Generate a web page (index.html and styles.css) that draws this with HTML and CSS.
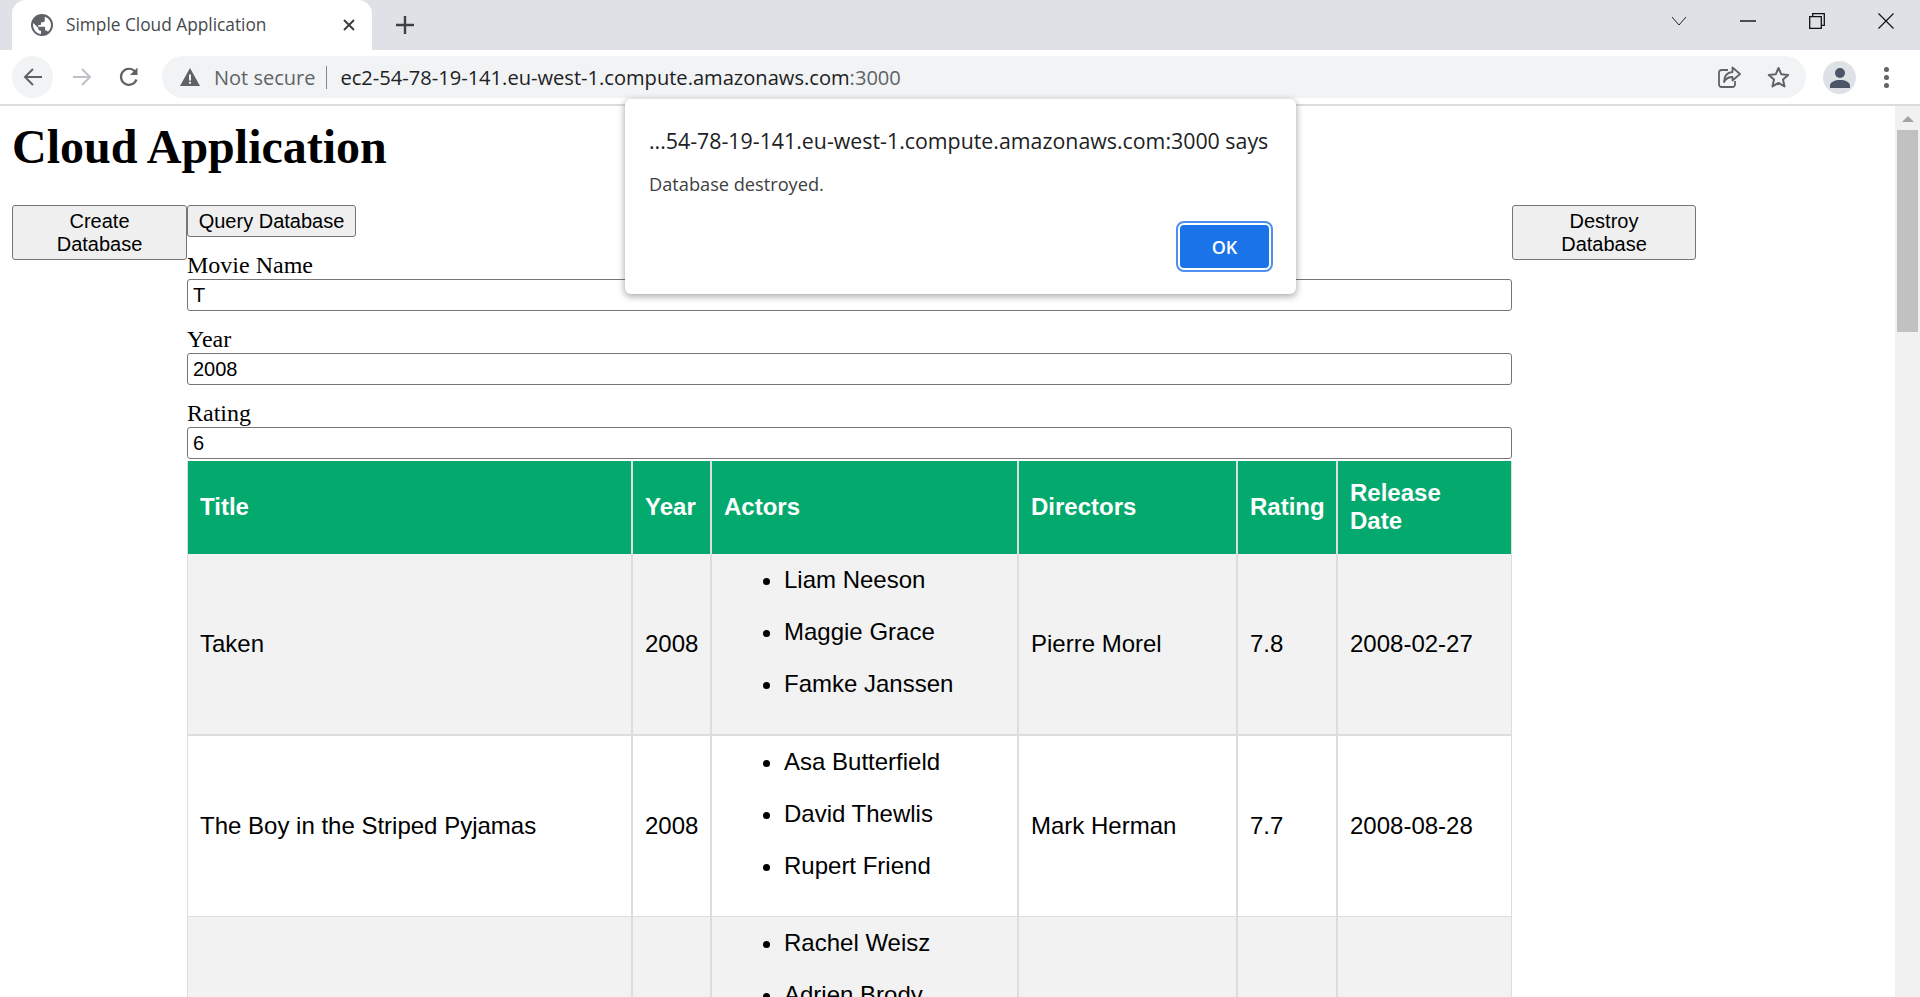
FILE: index.html
```html
<!DOCTYPE html>
<html lang="en">
<head>
    <meta charset="UTF-8">
    <meta name="viewport" content="width=device-width, initial-scale=1.0">
    <title>Simple Cloud Application</title>
    <link rel="stylesheet" href="styles.css">
</head>
<body>

<div class="browser">
    <div class="tabstrip">
        <div class="tab">
            <svg class="favicon" viewBox="0 0 24 24"><circle cx="12" cy="12" r="12" fill="#5f6368"/><path d="M11 21.9C6.1 21.4 2.2 17.2 2.2 12c0-.8.1-1.5.3-2.2L8 15.2v1c0 1.100.9 2 2 2h1zM18.300 19.400c-.3-.8-1-1.400-1.900-1.400h-1v-3c0-.6-.4-1-1-1H8v-2h2c.6 0 1-.4 1-1V9h2c1.100 0 2-.9 2-2V3c3.800 1.200 6.800 4.800 6.800 9 0 2.900-1.400 5.600-3.500 7.400z" fill="#fff"/></svg>
            <span class="tab-title">Simple Cloud Application</span>
            <svg class="tab-close" viewBox="0 0 12 12"><path d="M1 1l10 10M11 1L1 11" stroke="#3c4043" stroke-width="2"/></svg>
        </div>
        <svg class="new-tab" viewBox="0 0 18 18"><path d="M9 0v18M0 9h18" stroke="#3c4043" stroke-width="2.4"/></svg>
        <div class="win-controls">
            <div class="win-btn"><svg width="16" height="10" viewBox="0 0 16 10"><path d="M1 1l7 8 7-8" fill="none" stroke="#222" stroke-width="1"/></svg></div>
            <div class="win-btn"><svg width="16" height="2" viewBox="0 0 16 2"><path d="M0 1h16" stroke="#111" stroke-width="1.400"/></svg></div>
            <div class="win-btn"><svg width="16" height="16" viewBox="0 0 16 16"><path d="M.7 3.700h11.600v11.600H.7zM3.700 3.700V.7h11.600v11.600h-3" fill="none" stroke="#111" stroke-width="1.300"/></svg></div>
            <div class="win-btn"><svg width="16" height="16" viewBox="0 0 16 16"><path d="M.5.5l15 15M15.500.5l-15 15" stroke="#111" stroke-width="1.200"/></svg></div>
        </div>
    </div>

    <div class="toolbar">
        <div class="nav-btn hover"><svg width="20" height="20" viewBox="0 0 20 20"><path d="M19 10H2M10 2l-8 8 8 8" fill="none" stroke="#5f6368" stroke-width="2"/></svg></div>
        <div class="nav-btn"><svg width="20" height="20" viewBox="0 0 20 20"><path d="M1 10h17M10 2l8 8-8 8" fill="none" stroke="#bdc1c6" stroke-width="2"/></svg></div>
        <div class="nav-btn reload"><svg width="22" height="22" viewBox="0 0 22 22"><path d="M18.500 13.500A8 8 0 1 1 17 5.500" fill="none" stroke="#5f6368" stroke-width="2.200"/><path d="M19.500 1.500v7.500H12z" fill="#5f6368"/></svg></div>
        <div class="omnibox">
            <svg class="warn" viewBox="0 0 20 18"><path d="M10 0l10 18H0z" fill="#5f6368"/><path d="M9 6.500h2v6H9zM9 13.800h2v2H9z" fill="#f1f3f4"/></svg>
            <span class="not-secure">Not secure</span>
            <span class="omni-sep"></span>
            <span class="url">ec2-54-78-19-141.eu-west-1.compute.amazonaws.com<span class="url-port">:3000</span></span>
            <div class="omni-icons">
                <svg width="23" height="22" viewBox="0 0 23 22"><path d="M10 4H3.500A2.500 2.500 0 0 0 1 6.500v12A2.500 2.500 0 0 0 3.500 21h11a2.500 2.500 0 0 0 2.500-2.500V15" fill="none" stroke="#5f6368" stroke-width="1.800"/><path d="M14.500 1.500L22 8l-7.500 6.500V11C10 11 7.500 13 6 16c0-5.500 3-9.500 8.500-10z" fill="none" stroke="#5f6368" stroke-width="1.800" stroke-linejoin="round"/></svg>
                <svg width="23" height="22" viewBox="0 0 23 22"><path d="M11.500 2l2.800 6.300 6.900.7-5.200 4.600 1.500 6.800-6-3.500-6 3.500 1.500-6.800L1.800 9l6.900-.7z" fill="none" stroke="#5f6368" stroke-width="2" stroke-linejoin="round"/></svg>
            </div>
        </div>
        <div class="avatar"><svg width="22" height="20" viewBox="0 0 22 20"><circle cx="11" cy="5" r="5" fill="#4a5568"/><path d="M1 20v-2.500C1 14 6 12 11 12s10 2 10 5.500V20z" fill="#4a5568"/></svg></div>
        <div class="menu-dots"><span></span><span></span><span></span></div>
    </div>

    <div class="viewport">
        <main class="page">
            <h1>Cloud Application</h1>
            <div class="layout">
                <button class="btn btn-create">Create Database</button>
                <div class="center">
                    <button class="btn btn-query">Query Database</button>
                    <label class="field-label">Movie Name</label>
                    <input class="field" type="text" value="T">
                    <label class="field-label">Year</label>
                    <input class="field" type="text" value="2008">
                    <label class="field-label">Rating</label>
                    <input class="field" type="text" value="6">
                    <table class="movies">
                        <colgroup>
                            <col class="col-title">
                            <col class="col-year">
                            <col class="col-actors">
                            <col class="col-directors">
                            <col class="col-rating">
                            <col class="col-date">
                        </colgroup>
                        <thead>
                            <tr>
                                <th>Title</th>
                                <th>Year</th>
                                <th>Actors</th>
                                <th>Directors</th>
                                <th>Rating</th>
                                <th>Release Date</th>
                            </tr>
                        </thead>
                        <tbody>
                            <tr>
                                <td>Taken</td>
                                <td>2008</td>
                                <td><ul><li>Liam Neeson</li><li>Maggie Grace</li><li>Famke Janssen</li></ul></td>
                                <td>Pierre Morel</td>
                                <td>7.8</td>
                                <td>2008-02-27</td>
                            </tr>
                            <tr>
                                <td>The Boy in the Striped Pyjamas</td>
                                <td>2008</td>
                                <td><ul><li>Asa Butterfield</li><li>David Thewlis</li><li>Rupert Friend</li></ul></td>
                                <td>Mark Herman</td>
                                <td>7.7</td>
                                <td>2008-08-28</td>
                            </tr>
                            <tr>
                                <td></td>
                                <td></td>
                                <td><ul><li>Rachel Weisz</li><li>Adrien Brody</li></ul></td>
                                <td></td>
                                <td></td>
                                <td></td>
                            </tr>
                        </tbody>
                    </table>
                </div>
                <button class="btn btn-destroy">Destroy Database</button>
            </div>
        </main>
        <div class="scrollbar">
            <div class="scroll-up"></div>
            <div class="scroll-thumb"></div>
        </div>
    </div>

    <div class="dialog">
        <div class="dialog-title">...54-78-19-141.eu-west-1.compute.amazonaws.com:3000 says</div>
        <div class="dialog-msg">Database destroyed.</div>
        <div class="dialog-actions">
            <button class="dialog-ok">OK</button>
        </div>
    </div>
</div>

</body>
</html>
```

FILE: styles.css
```css
* {
    box-sizing: border-box;
}
html, body {
    margin: 0;
    height: 997px;
    overflow: hidden;
    background: white;
}
.browser {
    position: relative;
    display: flex;
    flex-direction: column;
    height: 997px;
    overflow: hidden;
    font-family: "Open Sans", sans-serif;
}

/* tab strip */
.tabstrip {
    display: flex;
    height: 50px;
    flex: none;
    padding-left: 12px;
    background-color: #dee1e6;
}
.tab {
    display: flex;
    align-items: center;
    width: 360px;
    height: 50px;
    padding-left: 19px;
    background-color: white;
    border-radius: 14px 14px 0 0;
}
.favicon {
    width: 22px;
    height: 22px;
    flex: none;
}
.tab-title {
    margin: -2px 0 0 13px;
    width: 277px;
    font-size: 17.300px;
    color: #45494d;
    white-space: nowrap;
}
.tab-close {
    width: 12px;
    height: 12px;
    flex: none;
}
.new-tab {
    width: 18px;
    height: 18px;
    margin: 16px 0 0 24px;
}
.win-controls {
    display: flex;
    margin-left: auto;
}
.win-btn {
    display: flex;
    align-items: center;
    justify-content: center;
    width: 69px;
    height: 41px;
}

/* toolbar */
.toolbar {
    display: flex;
    align-items: center;
    gap: 8px;
    height: 56px;
    flex: none;
    padding: 6px 0 6px 12px;
    border-bottom: 2px solid #dadce0;
    background-color: white;
}
.nav-btn {
    display: flex;
    align-items: center;
    justify-content: center;
    width: 41px;
    height: 42px;
    border-radius: 50%;
}
.nav-btn.hover {
    background-color: #f1f3f4;
}
.nav-btn.reload {
    padding-right: 3px;
}
.omnibox {
    display: flex;
    align-items: center;
    width: 1644px;
    height: 42px;
    margin-left: 3px;
    padding: 0 16px 0 18px;
    border-radius: 21px;
    background-color: #f1f3f4;
}
.warn {
    width: 20px;
    height: 18px;
    flex: none;
}
.not-secure {
    margin-left: 14px;
    font-size: 20px;
    color: #5f6368;
    white-space: nowrap;
}
.omni-sep {
    width: 1px;
    height: 23px;
    margin: 0 13px 0 11px;
    background-color: #80868b;
}
.url {
    font-size: 20.100px;
    color: #202124;
    white-space: nowrap;
}
.url-port {
    color: #5f6368;
}
.omni-icons {
    display: flex;
    gap: 26px;
    margin-left: auto;
}
.avatar {
    display: flex;
    align-items: flex-end;
    justify-content: center;
    width: 33px;
    height: 33px;
    margin-left: 9px;
    padding-bottom: 6px;
    border-radius: 50%;
    background-color: #dee1e6;
}
.menu-dots {
    display: flex;
    flex-direction: column;
    gap: 3px;
    margin-left: 20px;
}
.menu-dots span {
    width: 5px;
    height: 5px;
    border-radius: 50%;
    background-color: #5f6368;
}

/* page */
.viewport {
    display: flex;
    flex: 1;
    min-height: 0;
}
.page {
    flex: 1;
    min-width: 0;
    padding: 12px 0 0 12px;
    overflow: hidden;
    font-family: "Liberation Serif", serif;
    font-size: 24px;
    color: black;
}
h1 {
    margin: 1px 0 31px;
    font-size: 48px;
    line-height: 55px;
}
.layout {
    display: flex;
    align-items: flex-start;
}
.center {
    width: 1325px;
    flex: none;
}
.btn {
    padding: 0 8px;
    border: 1.5px solid #767676;
    border-radius: 3px;
    background-color: #efefef;
    font-family: "Liberation Sans", sans-serif;
    font-size: 20px;
    line-height: 23px;
    color: black;
}
.btn-create {
    width: 175px;
    height: 55px;
    flex: none;
    padding: 0 20px;
}
.btn-destroy {
    width: 184px;
    height: 55px;
    flex: none;
    padding: 0 20px;
}
.btn-query {
    display: block;
    width: 169px;
    height: 32px;
    white-space: nowrap;
}
.field-label {
    display: block;
    margin-top: 15px;
    line-height: 27px;
}
.field {
    display: block;
    width: 100%;
    height: 32px;
    padding: 0 5px;
    border: 1.5px solid #767676;
    border-radius: 3px;
    font-family: "Liberation Sans", sans-serif;
    font-size: 20px;
    color: black;
}

/* table */
.movies {
    width: 1325px;
    margin-top: 2px;
    table-layout: fixed;
    border-collapse: separate;
    border-spacing: 0;
    border-left: 1px solid #ddd;
    font-family: "Liberation Sans", sans-serif;
    font-size: 24px;
    line-height: 28px;
}
.col-title { width: 445px; }
.col-year { width: 79px; }
.col-actors { width: 307px; }
.col-directors { width: 219px; }
.col-rating { width: 100px; }
.col-date { width: 174px; }
.movies th, .movies td {
    padding: 12px;
    border-right: 2px solid #ddd;
    border-bottom: 1px solid #ddd;
    text-align: left;
}
.movies th:last-child, .movies td:last-child {
    border-right-width: 1px;
}
.movies th {
    padding: 18px 12px 19px;
    border-bottom: none;
    background-color: #04aa6d;
    color: white;
}
.movies tbody tr:nth-child(odd) td {
    border-bottom-width: 2px;
    background-color: #f2f2f2;
}
.movies ul {
    margin: 0;
    padding-left: 60px;
}
.movies li {
    margin-bottom: 24px;
}

/* scrollbar */
.scrollbar {
    position: relative;
    width: 25px;
    flex: none;
    background-color: #f1f1f1;
}
.scroll-up {
    width: 0;
    margin: 10px auto 0;
    border-left: 6px solid transparent;
    border-right: 6px solid transparent;
    border-bottom: 6px solid #a3a3a3;
}
.scroll-thumb {
    width: 21px;
    height: 202px;
    margin: 8px 0 0 2px;
    background-color: #c1c1c1;
}

/* alert */
.dialog {
    position: absolute;
    left: 625px;
    top: 99px;
    width: 671px;
    height: 195px;
    padding: 27px 24px 0;
    border-radius: 6px;
    background-color: white;
    box-shadow: 0 2px 6px 1px rgba(60, 64, 67, 0.4);
}
.dialog-title {
    font-size: 21.350px;
    line-height: 30px;
    color: #202124;
    white-space: nowrap;
}
.dialog-msg {
    margin-top: 15px;
    font-size: 18.200px;
    line-height: 26px;
    color: #3c4043;
}
.dialog-actions {
    display: flex;
    justify-content: flex-end;
    margin: 26px 1px 0 0;
}
.dialog-ok {
    width: 93px;
    height: 47px;
    border: 2px solid white;
    border-radius: 6px;
    outline: 2px solid #4d8ef0;
    background-color: #1a73e8;
    font-family: "Open Sans", sans-serif;
    font-size: 18px;
    font-weight: 600;
    color: white;
}
```
